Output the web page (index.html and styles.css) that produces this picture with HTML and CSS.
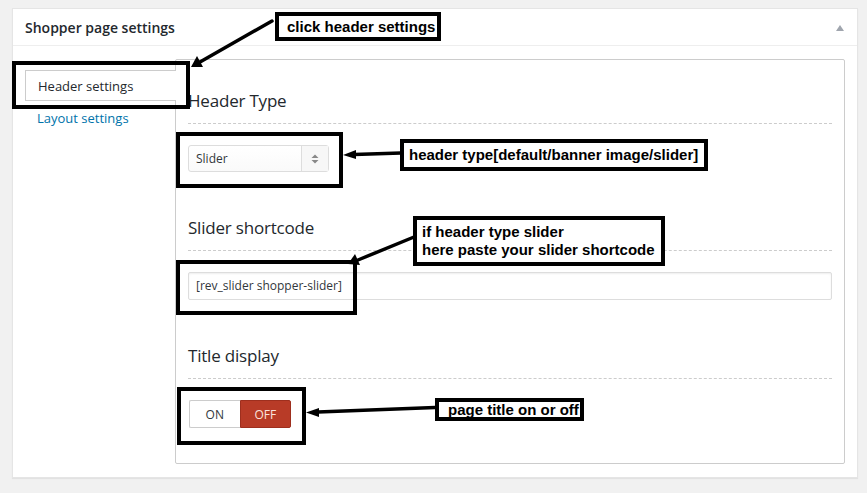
FILE: index.html
```html
<!DOCTYPE html>
<html>
<head>
<meta charset="utf-8">
<link rel="stylesheet" href="styles.css">
</head>
<body>
<div class="page">
  <div class="metabox">
    <div class="mb-header">
      <h2 class="mb-title">Shopper page settings</h2>
      <span class="toggle-arrow"></span>
    </div>
    <div class="mb-body">
      <ul class="tabs">
        <li class="tab active">Header settings</li>
        <li class="tab link">Layout settings</li>
      </ul>
      <div class="panel">
        <div class="section first">
          <h3 class="sec-title">Header Type</h3>
          <div class="select">
            <span class="select-val">Slider</span>
            <span class="select-arrows">
              <svg width="8" height="10" viewBox="0 0 8 10"><path d="M4 0.5 L7.5 4 L0.5 4 Z" fill="#888"/><path d="M4 9.5 L7.5 6 L0.5 6 Z" fill="#888"/></svg>
            </span>
          </div>
        </div>
        <div class="section">
          <h3 class="sec-title">Slider shortcode</h3>
          <div class="text-input">[rev_slider shopper-slider]</div>
        </div>
        <div class="section">
          <h3 class="sec-title">Title display</h3>
          <div class="switch">
            <span class="sw on">ON</span>
            <span class="sw off">OFF</span>
          </div>
        </div>
      </div>
    </div>
  </div>

  <div class="hl hl-tab"></div>
  <div class="hl hl-select"></div>
  <div class="hl hl-input"></div>
  <div class="hl hl-switch"></div>

  <div class="note note-a">click header settings</div>
  <div class="note note-b">header type[default/banner image/slider]</div>
  <div class="note note-c">if header type slider<br>here paste your slider shortcode</div>
  <div class="note note-d">page title on or off</div>

  <svg class="arrows" width="867" height="493" viewBox="0 0 867 493">
    <g stroke="#000" stroke-width="3.5" fill="none" stroke-linecap="round">
      <line x1="272" y1="21" x2="200" y2="62"/>
      <line x1="401" y1="153" x2="354" y2="154.5"/>
      <line x1="414" y1="237" x2="358" y2="260"/>
      <line x1="435" y1="407.5" x2="318" y2="412"/>
    </g>
    <g fill="#000">
      <polygon points="191,67 197,56 203,67"/>
      <polygon points="343,155 356,150 356,159"/>
      <polygon points="348,264 355,254 360,265"/>
      <polygon points="306,412.5 319,408 319,417"/>
    </g>
  </svg>
</div>
</body>
</html>
```
FILE: styles.css
```css
html, body {
  margin: 0;
  padding: 0;
}
body {
  background: #f1f1f1;
  font-family: "Open Sans", "Noto Sans", sans-serif;
  color: #23282d;
  width: 867px;
  height: 493px;
  overflow: hidden;
}
.page {
  position: relative;
  width: 867px;
  height: 493px;
  padding-top: 8px;
  box-sizing: border-box;
}
.metabox {
  margin-left: 12px;
  width: 846px;
  height: 470px;
  box-sizing: border-box;
  background: #fff;
  border: 1px solid #e5e5e5;
  box-shadow: 0 1px 1px rgba(0,0,0,.06);
}
.mb-header {
  height: 37px;
  box-sizing: border-box;
  border-bottom: 1px solid #eee;
  display: flex;
  align-items: center;
  justify-content: space-between;
  padding: 0 13px 0 12px;
}
.mb-title {
  margin: 0;
  font-size: 14px;
  font-weight: 600;
  color: #23282d;
}
.toggle-arrow {
  width: 0;
  height: 0;
  border-left: 4px solid transparent;
  border-right: 4px solid transparent;
  border-bottom: 6px solid #a0a5ae;
  margin-top: 1px;
}
.mb-body {
  display: flex;
  padding: 13px 12px 0 12px;
}
.tabs {
  list-style: none;
  margin: 11px 0 0 0;
  padding: 0;
  width: 150px;
  flex: none;
  position: relative;
  z-index: 1;
}
.tab {
  font-size: 13px;
  height: 31px;
  line-height: 31px;
  box-sizing: border-box;
  padding-left: 12px;
}
.tab.active {
  border: 1px solid #ccc;
  border-right: none;
  background: #fff;
  margin-right: -1px;
  line-height: 30px;
}
.tab.link {
  color: #0073aa;
  line-height: 34px;
}
.panel {
  flex: 1;
  height: 405px;
  box-sizing: border-box;
  border: 1px solid #ccc;
  border-radius: 2px;
  padding: 28px 12px 0 12px;
}
.section {
  margin-top: 43px;
}
.section.first {
  margin-top: 0;
}
.sec-title {
  margin: 0 0 21px 0;
  font-size: 17px;
  font-weight: 400;
  line-height: 25px;
  padding-bottom: 10px;
  border-bottom: 1px dashed #ccc;
  color: #23282d;
  letter-spacing: -0.2px;
}
.select {
  width: 141px;
  height: 27px;
  box-sizing: border-box;
  border: 1px solid #ddd;
  border-radius: 3px;
  display: flex;
  background: linear-gradient(#fff, #fafafa);
  font-size: 12px;
  color: #32373c;
}
.select-val {
  flex: 1;
  padding-left: 7px;
  line-height: 25px;
}
.select-arrows {
  width: 26px;
  border-left: 1px solid #ddd;
  display: flex;
  align-items: center;
  justify-content: center;
  background: #f7f7f7;
}
.text-input {
  height: 28px;
  box-sizing: border-box;
  border: 1px solid #ddd;
  border-radius: 2px;
  box-shadow: inset 0 1px 2px rgba(0,0,0,.07);
  font-size: 12px;
  line-height: 26px;
  padding-left: 7px;
  color: #32373c;
}
.switch {
  display: flex;
  height: 28px;
  width: 102px;
  margin-left: 1px;
  font-size: 12px;
}
.sw {
  flex: 1;
  display: flex;
  align-items: center;
  justify-content: center;
  box-sizing: border-box;
}
.sw.on {
  border: 1px solid #ccc;
  border-right: none;
  border-radius: 2px 0 0 2px;
  color: #32373c;
  background: #fff;
}
.sw.off {
  background: #b83b27;
  border: 1px solid #9e2f1e;
  border-radius: 0 2px 2px 0;
  color: #fbe3de;
}
.hl {
  position: absolute;
  border: 4px solid #000;
  box-sizing: border-box;
}
.hl-tab { left: 12px; top: 61px; width: 178px; height: 48px; }
.hl-select { left: 176px; top: 132px; width: 167px; height: 56px; }
.hl-input { left: 176px; top: 260px; width: 181px; height: 55px; }
.hl-switch { left: 177px; top: 387px; width: 129px; height: 58px; }
.note {
  position: absolute;
  background: #fff;
  border: 4px solid #000;
  box-sizing: border-box;
  font-family: "Liberation Sans", Arial, sans-serif;
  font-weight: 700;
  font-size: 15px;
  color: #000;
  white-space: nowrap;
}
.note-a { left: 275px; top: 12px; width: 166px; height: 29px; line-height: 21px; padding-left: 8px; }
.note-b { left: 400px; top: 139px; width: 308px; height: 32px; line-height: 24px; padding-left: 5px; }
.note-c { left: 413px; top: 216px; width: 252px; height: 50px; line-height: 18px; padding: 3px 0 0 5px; }
.note-d { left: 435px; top: 398px; width: 149px; height: 23px; line-height: 15px; padding-left: 9px; }
.arrows {
  position: absolute;
  left: 0;
  top: 0;
  pointer-events: none;
}
```
